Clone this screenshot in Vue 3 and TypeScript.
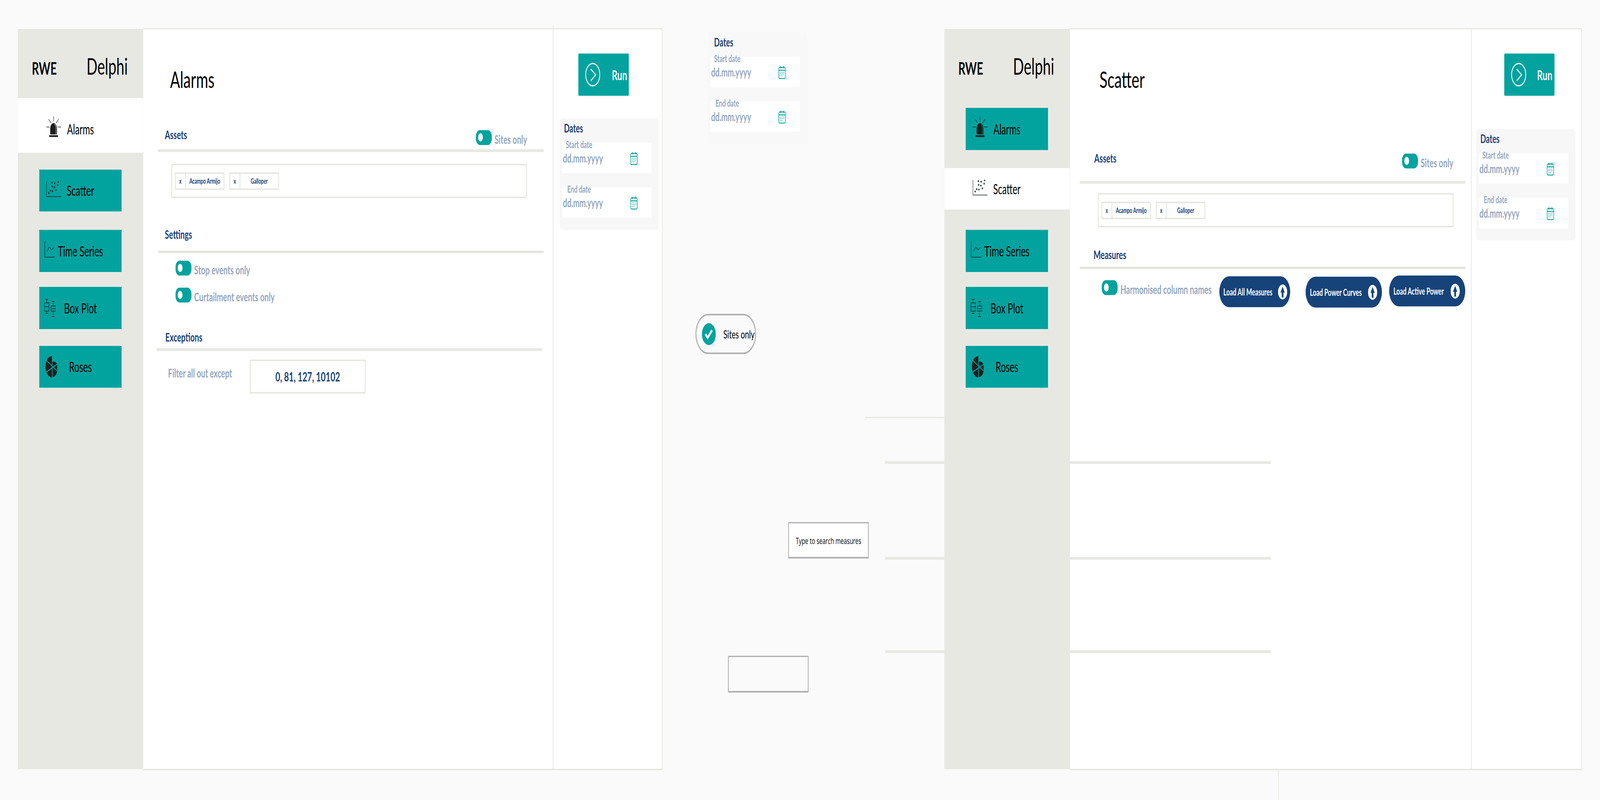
<script setup lang="ts">
interface NavItem {
  label: string
  icon: 'alarm' | 'scatter' | 'series' | 'box' | 'rose'
  gap: number
  h: number
  pt?: number
  pb?: number
  active?: boolean
}

const iconBox = {
  alarm: { w: 60, h: 54, x: 28, y: 21 },
  scatter: { w: 60, h: 40, x: 28, y: 30 },
  series: { w: 42, h: 42, x: 21, y: 29 },
  box: { w: 45, h: 46, x: 20, y: 31 },
  rose: { w: 47, h: 55, x: 25, y: 26 }
}

const navAlarms: NavItem[] = [
  { label: 'Alarms', icon: 'alarm', gap: 0, h: 108, pt: 25, pb: 7, active: true },
  { label: 'Scatter', icon: 'scatter', gap: 43, h: 107 },
  { label: 'Time Series', icon: 'series', gap: 47, h: 108 },
  { label: 'Box Plot', icon: 'box', gap: 38, h: 108 },
  { label: 'Roses', icon: 'rose', gap: 43, h: 107 }
]

const navScatter: NavItem[] = [
  { label: 'Alarms', icon: 'alarm', gap: 25, h: 108 },
  { label: 'Scatter', icon: 'scatter', gap: 46, h: 106, active: true },
  { label: 'Time Series', icon: 'series', gap: 52, h: 108 },
  { label: 'Box Plot', icon: 'box', gap: 38, h: 108 },
  { label: 'Roses', icon: 'rose', gap: 43, h: 107 }
]

const assets = ['Acampo Armijo', 'Galloper']
const dateFields = ['Start date', 'End date']
const settings = ['Stop events only', 'Curtailment events only']

const loaders = [
  { label: 'Load All Measures', w: 285, gap: 31, top: 2, pr: 12, pl: 16 },
  { label: 'Load Power Curves', w: 307, gap: 62, top: 3, pr: 19, pl: 17 },
  { label: 'Load Active Power', w: 306, gap: 29, top: 0, pr: 22, pl: 17 }
]

/* The artboard is 6435×2047; fit it to the window actually given (identity at that size). */
const fit = {
  transform: `scale(${Math.min(1, window.innerWidth / 6435)}, ${Math.min(1, window.innerHeight / 2047)})`
}

function btnStyle(i: NavItem) {
  return { height: `${i.h}px` }
}
function rowStyle(i: NavItem) {
  return { marginTop: `${i.gap}px`, paddingTop: `${i.pt ?? 0}px`, paddingBottom: `${i.pb ?? 0}px` }
}
function iconStyle(i: NavItem) {
  const b = iconBox[i.icon]
  return { left: `${b.x}px`, top: `${b.y}px`, width: `${b.w}px`, height: `${b.h}px` }
}
function loaderStyle(l: (typeof loaders)[number]) {
  return { width: `${l.w}px`, marginLeft: `${l.gap}px`, marginTop: `${l.top}px`, paddingLeft: `${l.pl}px`, paddingRight: `${l.pr}px` }
}
</script>

<template>
  <div class="viewport">
  <div class="canvas" :style="fit">
    <svg class="defs" aria-hidden="true">
      <symbol id="i-alarm" viewBox="0 0 60 54">
        <g fill="none" stroke="#1c1c1c" stroke-width="1.6" stroke-linecap="round">
          <path d="M29.5 1v12M10 8.5l9 8.9M49 8.5l-9 8.9M.8 28h12M47 28h12.2" />
        </g>
        <path fill="#1c1c1c" d="M16 47V33c0-9 6-15 13.5-15S43 24 43 33v14z" />
        <path fill="none" stroke="currentColor" stroke-width="1.4" d="M33 20.5c3.8 1 6 5.5 6 12V47" />
        <rect x="12" y="49" width="35.5" height="4.5" rx="1.5" fill="#1c1c1c" />
      </symbol>
      <symbol id="i-scatter" viewBox="0 0 60 40">
        <path fill="none" stroke="#1c2326" stroke-width="1.6" d="M1 0v39h59" />
        <path
          fill="none"
          stroke="#1c2326"
          stroke-width="1.8"
          d="M7 30h6M10 27v6M13 24h6M16 21v6M22 25h6M25 22v6M36 22h6M39 19v6M21 13h6M24 10v6M30 15h6M33 12v6M43 10h6M46 7v6M20 3.5h6M23 .5v6M31 5h6M34 2v6M45 1.5h6M48 0v4.500"
        />
      </symbol>
      <symbol id="i-series" viewBox="0 0 42 42">
        <path fill="none" stroke="#1c2326" stroke-width="1.6" d="M1 0v41h41" />
        <path fill="none" stroke="#1c2326" stroke-width="1.5" d="M10 27l9-12 10 7 8-6" />
      </symbol>
      <symbol id="i-box" viewBox="0 0 45 46">
        <g fill="none" stroke="#1c2326" stroke-width="1.6">
          <path d="M4 1h12M10 1v9M.8 10h18v21H.8zM.8 20h18M10 31v6M4 37h12" />
          <path d="M30 6.5h12M36 6.5V18M27 18h18v13H27zM27 25h18M36 31v14M30 45h12" />
        </g>
      </symbol>
      <symbol id="i-rose" viewBox="0 0 47 55">
        <g fill="#1e1e1e">
          <path d="M27 28V0A27 28 0 0 0 4 12z" />
          <path d="M27 28L4 12a27 28 0 0 0-1.5 27z" />
          <path d="M27 28L2.5 39A27 28 0 0 0 27 55z" />
          <path d="M27 28v25a20 25 0 0 0 20-13.5z" />
          <path d="M27 28l20 11.5a20 20 0 0 0 0-19z" />
          <path d="M27 28l19.700-7A20 14 0 0 0 27 14z" />
        </g>
        <g fill="none" stroke="#02a39f" stroke-width="2.6">
          <path d="M27 0v55M3 11l44 27M1 42l46-21" />
        </g>
      </symbol>
      <symbol id="i-cal" viewBox="0 0 29 33">
        <g fill="none" stroke="#02a39f">
          <rect x="1.2" y="3.5" width="26.6" height="28.3" rx="4" stroke-width="2.3" />
          <path stroke-width="2.3" d="M1.2 11h26.6M8.5 0v6.5M20.5 0v6.5" />
          <path stroke-width="1.7" stroke-dasharray="2 1.1" d="M5 16.5h19M5 20.5h19M5 25h13" />
        </g>
      </symbol>
      <symbol id="i-run" viewBox="0 0 60 60">
        <circle cx="30" cy="30" r="28.5" fill="none" stroke="#fff" stroke-width="3" />
        <path fill="none" stroke="#fff" stroke-width="3" d="M22 16l20 14.5-20 15" />
      </symbol>
      <symbol id="i-load" viewBox="0 0 37 38">
        <ellipse cx="18.5" cy="19" rx="18.5" ry="19" fill="#fff" />
        <path fill="#16437a" d="M18.5 5l8.500 15.500h-5V30a3 3 0 0 1-7 0v-9.500h-5z" />
      </symbol>
    </svg>

    <!-- Alarms artboard -->
    <section class="frame frame-a">
      <aside class="sidebar">
        <header class="brand"><span class="rwe">RWE</span><span class="delphi">Delphi</span></header>
        <div v-for="i in navAlarms" :key="i.label" class="nav-row" :class="{ active: i.active }" :style="rowStyle(i)">
          <a class="nav-btn" :style="btnStyle(i)">
            <svg class="nav-icon" :style="iconStyle(i)"><use :href="`#i-${i.icon}`" /></svg>
            {{ i.label }}
          </a>
        </div>
      </aside>

      <main class="main main-a">
        <h1>Alarms</h1>

        <div class="head head-assets-a">
          <h2>Assets</h2>
          <label class="switch switch-head"><i class="toggle" /><span>Sites only</span></label>
        </div>
        <div class="assetbox assetbox-a">
          <div v-for="a in assets" :key="a" class="chip"><b>x</b><span>{{ a }}</span></div>
        </div>

        <div class="head head-settings">
          <h2>Settings</h2>
        </div>
        <div class="settings">
          <label v-for="s in settings" :key="s" class="switch"><i class="toggle" /><span>{{ s }}</span></label>
        </div>

        <div class="head head-exceptions">
          <h2>Exceptions</h2>
        </div>
        <div class="filter">
          <span class="filter-label">Filter all out except</span>
          <div class="filter-input">0, 81, 127, 10102</div>
        </div>
      </main>

      <div class="side side-a">
        <button class="run run-a"><svg class="run-icon"><use href="#i-run" /></svg><span>Run</span></button>
        <div class="dates dates-a">
          <h3>Dates</h3>
          <div v-for="f in dateFields" :key="f" class="field">
            <span class="field-label">{{ f }}</span>
            <span class="field-value">dd.mm.yyyy</span>
            <svg class="cal"><use href="#i-cal" /></svg>
          </div>
        </div>
      </div>
    </section>

    <!-- Scatter artboard -->
    <section class="frame frame-b">
      <aside class="sidebar">
        <header class="brand"><span class="rwe">RWE</span><span class="delphi">Delphi</span></header>
        <div v-for="i in navScatter" :key="i.label" class="nav-row" :class="{ active: i.active }" :style="rowStyle(i)">
          <a class="nav-btn" :style="btnStyle(i)">
            <svg class="nav-icon" :style="iconStyle(i)"><use :href="`#i-${i.icon}`" /></svg>
            {{ i.label }}
          </a>
        </div>
      </aside>

      <main class="main main-b">
        <h1>Scatter</h1>

        <div class="head head-assets-b">
          <h2>Assets</h2>
          <label class="switch switch-head"><i class="toggle" /><span>Sites only</span></label>
        </div>
        <div class="assetbox assetbox-b">
          <div v-for="a in assets" :key="a" class="chip"><b>x</b><span>{{ a }}</span></div>
        </div>

        <div class="head head-measures">
          <h2>Measures</h2>
        </div>
        <div class="measures">
          <label class="switch switch-measures"><i class="toggle" /><span>Harmonised column names</span></label>
          <button v-for="l in loaders" :key="l.label" class="load" :style="loaderStyle(l)">
            <span>{{ l.label }}</span>
            <svg class="load-icon"><use href="#i-load" /></svg>
          </button>
        </div>
      </main>

      <div class="side side-b">
        <button class="run run-b"><svg class="run-icon"><use href="#i-run" /></svg><span>Run</span></button>
        <div class="dates dates-b">
          <h3>Dates</h3>
          <div v-for="f in dateFields" :key="f" class="field">
            <span class="field-label">{{ f }}</span>
            <span class="field-value">dd.mm.yyyy</span>
            <svg class="cal"><use href="#i-cal" /></svg>
          </div>
        </div>
      </div>
    </section>

    <!-- Loose pieces on the canvas -->
    <div class="dates dates-float">
      <h3>Dates</h3>
      <div v-for="f in dateFields" :key="f" class="field">
        <span class="field-label">{{ f }}</span>
        <span class="field-value">dd.mm.yyyy</span>
        <svg class="cal"><use href="#i-cal" /></svg>
      </div>
    </div>

    <div class="pill">
      <svg class="pill-check" viewBox="0 0 56 56">
        <circle cx="28" cy="28" r="28" fill="#02a39f" />
        <path fill="none" stroke="#fff" stroke-width="6.5" d="M14 28l9 9 18-19" />
      </svg>
      <span>Sites only</span>
    </div>

    <div class="stray line-1" />
    <div class="stray line-2" />
    <div class="stray line-3" />
    <div class="stray line-4" />
    <div class="stray line-v" />

    <div class="search">Type to search measures</div>
    <div class="search search-empty" />
  </div>
  </div>
</template>

<style>
html,
body {
  margin: 0;
  background: #fafafa;
}
</style>

<style scoped>
.viewport {
  width: 100vw;
  height: 100vh;
  overflow: hidden;
}
.canvas {
  position: relative;
  width: 6435px;
  height: 2047px;
  overflow: hidden;
  transform-origin: 0 0;
  background: #fafafa;
  font-family: Lato, "Liberation Sans", sans-serif;
  color: #000;
}
.defs {
  position: absolute;
  width: 0;
  height: 0;
}

/* artboards */
.frame {
  position: absolute;
  top: 74px;
  height: 1894px;
  display: flex;
}
.frame-a {
  left: 72px;
  width: 2593px;
}
.frame-b {
  left: 3798px;
  width: 2564px;
}

/* sidebar */
.sidebar {
  position: relative;
  z-index: 2;
  flex: none;
  width: 504px;
  background: #e8e8e3;
}
.frame-b .sidebar {
  width: 505px;
}
.brand {
  display: flex;
  align-items: baseline;
  gap: 120px;
  height: 177px;
  box-sizing: border-box;
  padding: 65px 0 0 56px;
  line-height: 60px;
}
.rwe {
  font-size: 44.4px;
  font-weight: 700;
  color: #0b0b0b;
}
.delphi {
  font-size: 57.7px;
}
.nav-row.active {
  background: #fff;
}
.frame-b .nav-row.active {
  width: 504px;
}
.nav-btn {
  position: relative;
  display: flex;
  align-items: center;
  justify-content: center;
  width: 331px;
  margin-left: 86px;
  background: #02a39f;
  font-size: 35.8px;
  color: #000;
}
.active .nav-btn {
  background: transparent;
}
.nav-icon {
  position: absolute;
  color: #02a39f;
}
.active .nav-icon {
  color: #fff;
}

/* main column */
.main {
  flex: 1;
  margin: -2px 0 -3px;
  background: #fff;
  border-top: 3px solid #e8e8e3;
  border-bottom: 4px solid #e8e8e3;
}
h1 {
  margin: 93px 0 0;
  font-size: 59px;
  font-weight: 400;
  line-height: 70px;
}
.main-a h1 {
  padding-left: 108px;
}
.main-b h1 {
  padding-left: 119px;
}
.head {
  display: flex;
  justify-content: space-between;
  align-items: flex-start;
  box-sizing: border-box;
  width: 1551px;
  border-bottom: 7px solid #e8e8e3;
}
h2 {
  margin: 0;
  font-size: 30.6px;
  font-weight: 700;
  line-height: 50px;
  color: #1b4077;
}
.head-assets-a {
  margin: 82px 0 0 60px;
  padding: 0 67px 8px 27px;
}
.head-settings {
  margin: 68px 0 0 60px;
  padding: 0 0 16px 27px;
}
.head-exceptions {
  margin: 61px 0 0 53px;
  padding: 0 0 3px 36px;
}
.head-assets-b {
  margin: 142px 0 0 40px;
  padding: 0 49px 29px 58px;
}
.head-measures {
  margin: 45px 0 0 40px;
  padding: 0 0 5px 55px;
}

/* switches */
.switch {
  display: flex;
  align-items: center;
  gap: 11px;
  font-size: 30.5px;
  font-weight: 700;
  color: #94a6c0;
  white-space: nowrap;
}
.switch span {
  margin-top: 8px;
}
.switch-head {
  margin-top: 10px;
}
.toggle {
  position: relative;
  flex: none;
  width: 64px;
  height: 38px;
  border-radius: 16px;
  background: #02a39f;
}
.toggle::after {
  content: "";
  position: absolute;
  left: 9px;
  top: 8px;
  width: 19px;
  height: 21px;
  border-radius: 50%;
  background: #fff;
}

/* asset chips */
.assetbox {
  display: flex;
  align-items: center;
  gap: 19px;
  box-sizing: border-box;
  height: 88px;
  padding-left: 10px;
  border: 4px solid #e8e8e3;
  border-radius: 3px;
}
.assetbox-a {
  width: 1430px;
  margin: 30px 0 0 113px;
}
.assetbox-b {
  width: 1431px;
  margin: 24px 0 0 112px;
}
.chip {
  display: flex;
  box-sizing: border-box;
  width: 200px;
  height: 45px;
  border: 4px solid #e8e8e3;
  border-radius: 3px;
  font-size: 18.1px;
  font-weight: 700;
  line-height: 37px;
  color: #16437a;
  text-align: center;
}
.chip b {
  flex: none;
  width: 37px;
  font-weight: 700;
}
.chip span {
  flex: 1;
  border-left: 4px solid #e8e8e3;
}

/* settings + filter */
.settings {
  display: flex;
  flex-direction: column;
  gap: 25px;
  margin: 16px 0 0 130px;
}
.filter {
  display: grid;
  grid-template-columns: 328px 467px;
  margin: 22px 0 0 100px;
}
.filter-label {
  margin-top: 9px;
  font-size: 30.2px;
  font-weight: 700;
  line-height: 50px;
  color: #94a6c0;
}
.filter-input {
  box-sizing: border-box;
  height: 87px;
  border: 4px solid #e8e8e3;
  border-radius: 3px;
  font-size: 33.3px;
  font-weight: 700;
  line-height: 79px;
  text-align: center;
  color: #16437a;
}

/* measures */
.measures {
  display: flex;
  align-items: flex-start;
  margin: 16px 0 0 128px;
}
.switch-measures {
  margin-top: 9px;
}
.load {
  display: flex;
  align-items: center;
  justify-content: space-between;
  flex: none;
  box-sizing: border-box;
  height: 79px;
  border: 0;
  border-radius: 40px;
  background: #16437a;
  font-family: inherit;
  font-size: 24.4px;
  font-weight: 700;
  color: #fff;
  white-space: nowrap;
}
.load-icon {
  flex: none;
  width: 37px;
  height: 38px;
}

/* right column */
.side {
  flex: none;
  box-sizing: border-box;
  margin: -2px 0 -3px;
  background: #fff;
  border: 3px solid #e8e8e3;
  border-bottom-width: 4px;
}
.side-a {
  position: relative;
  width: 442px;
}
.side-a::before {
  content: "";
  position: absolute;
  left: -3px;
  top: -10px;
  width: 3px;
  height: 10px;
  background: #e8e8e3;
}
.side-b {
  width: 446px;
}
.run {
  display: flex;
  align-items: center;
  box-sizing: border-box;
  height: 108px;
  margin-top: 62px;
  padding: 0 0 0 28px;
  border: 0;
  border-radius: 3px;
  background: #02a39f;
  font-family: inherit;
  font-size: 35px;
  font-weight: 700;
  color: #fff;
  white-space: nowrap;
}
.run span {
  margin-left: 47px;
}
.run-icon {
  flex: none;
  width: 60px;
  height: 60px;
}
.run-a {
  width: 203px;
  margin-left: 100px;
}
.run-b {
  width: 202px;
  margin-left: 131px;
}
.run-b span {
  margin-left: 44px;
}

/* date cards */
.dates {
  box-sizing: border-box;
  width: 399px;
  height: 285px;
  padding: 5px 0 0 10px;
  border-radius: 10px;
  background: #f7f7f7;
}
.dates-a {
  margin: 58px 0 0 25px;
}
.dates-b {
  margin: 85px 0 0 18px;
}
.dates-float {
  position: absolute;
  left: 2847px;
  top: 83px;
  width: 400px;
  height: 287px;
  background: #f8f8f8;
}
h3 {
  margin: 0 0 17px 7px;
  font-size: 29.7px;
  font-weight: 700;
  line-height: 40px;
  color: #1b4077;
}
.dates-float h3 {
  margin-left: 15px;
}
.field {
  display: grid;
  grid-template-columns: 274px 29px;
  grid-template-rows: 28px 40px;
  align-items: center;
  width: 360px;
  height: 78px;
  margin-bottom: 36px;
  background: #fff;
}
.field-label {
  grid-column: 1 / 3;
  width: 136px;
  margin-top: -18px;
  font-size: 24.3px;
  font-weight: 700;
  line-height: 28px;
  text-align: center;
  color: #94a6c0;
  white-space: nowrap;
}
.field-value {
  margin: -18px 0 0 3px;
  font-size: 30.1px;
  font-weight: 700;
  line-height: 40px;
  color: #94a6c0;
  white-space: nowrap;
}
.cal {
  width: 29px;
  height: 33px;
  margin-top: -15px;
}

/* loose pieces */
.pill {
  position: absolute;
  left: 2797px;
  top: 803px;
  display: flex;
  align-items: center;
  box-sizing: border-box;
  width: 244px;
  height: 103px;
  padding-left: 22px;
  border: 4px solid #b0b0b0;
  border-radius: 52px;
  font-size: 29.8px;
  white-space: nowrap;
}
.pill-check {
  flex: none;
  width: 56px;
  height: 56px;
  margin-right: 30px;
}
.stray {
  position: absolute;
  z-index: 1;
  background: #e8e8e3;
}
.line-1 {
  left: 3480px;
  top: 1067px;
  width: 318px;
  height: 3px;
}
.line-2,
.line-3,
.line-4 {
  left: 3560px;
  width: 1551px;
  height: 7px;
}
.line-2 {
  top: 1180px;
}
.line-3 {
  top: 1425px;
}
.line-4 {
  top: 1664px;
}
.line-v {
  left: 5140px;
  top: 1971px;
  width: 3px;
  height: 76px;
}
.search {
  position: absolute;
  left: 3170px;
  top: 1336px;
  box-sizing: border-box;
  width: 324px;
  height: 93px;
  border: 3px solid #adadad;
  border-width: 3px 3px 4px;
  border-radius: 2px;
  background: #fff;
  font-family: "Open Sans", sans-serif;
  font-size: 22.6px;
  line-height: 90px;
  text-align: center;
  white-space: nowrap;
}
.search-empty {
  left: 2928px;
  top: 1678px;
  height: 94px;
  background: transparent;
}
</style>
